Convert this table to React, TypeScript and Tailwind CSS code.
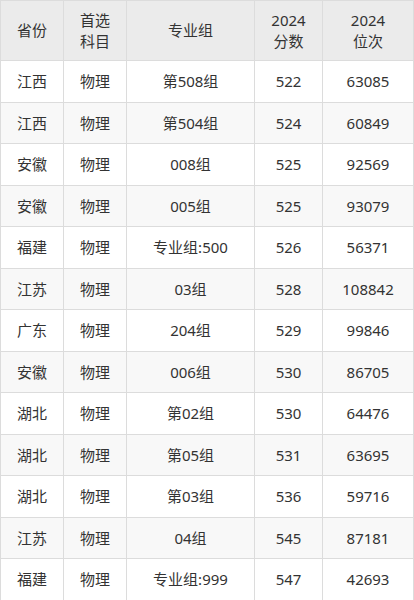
import React from "react";

const rows: [string, string, string, string, string][] = [
  ["江西", "物理", "第508组", "522", "63085"],
  ["江西", "物理", "第504组", "524", "60849"],
  ["安徽", "物理", "008组", "525", "92569"],
  ["安徽", "物理", "005组", "525", "93079"],
  ["福建", "物理", "专业组:500", "526", "56371"],
  ["江苏", "物理", "03组", "528", "108842"],
  ["广东", "物理", "204组", "529", "99846"],
  ["安徽", "物理", "006组", "530", "86705"],
  ["湖北", "物理", "第02组", "530", "64476"],
  ["湖北", "物理", "第05组", "531", "63695"],
  ["湖北", "物理", "第03组", "536", "59716"],
  ["江苏", "物理", "04组", "545", "87181"],
  ["福建", "物理", "专业组:999", "547", "42693"],
];

export default function App() {
  return (
    <div className="w-[414px] h-[600px] overflow-hidden bg-white text-[#333] text-[15px] font-['Noto_Sans','Noto_Sans_CJK_SC',sans-serif]">
      <table className="w-full border-collapse table-fixed text-center">
        <colgroup>
          <col className="w-[63px]" />
          <col className="w-[63px]" />
          <col className="w-[128px]" />
          <col className="w-[68px]" />
          <col />
        </colgroup>
        <thead>
          <tr className="h-[60px] bg-[#ebebeb]">
            <th className="border border-[#dcdcdc] font-normal">省份</th>
            <th className="border border-[#dcdcdc] font-normal leading-[21px]">
              首选
              <br />
              科目
            </th>
            <th className="border border-[#dcdcdc] font-normal">专业组</th>
            <th className="border border-[#dcdcdc] font-normal leading-[21px]">
              2024
              <br />
              分数
            </th>
            <th className="border border-[#dcdcdc] font-normal leading-[21px]">
              2024
              <br />
              位次
            </th>
          </tr>
        </thead>
        <tbody>
          {rows.map((r, i) => (
            <tr key={i} className={i % 2 === 1 ? "h-[41.5px] bg-[#f8f8f8]" : "h-[41.5px] bg-white"}>
              {r.map((c, j) => (
                <td key={j} className="border border-[#dcdcdc]">
                  {c}
                </td>
              ))}
            </tr>
          ))}
        </tbody>
      </table>
    </div>
  );
}
